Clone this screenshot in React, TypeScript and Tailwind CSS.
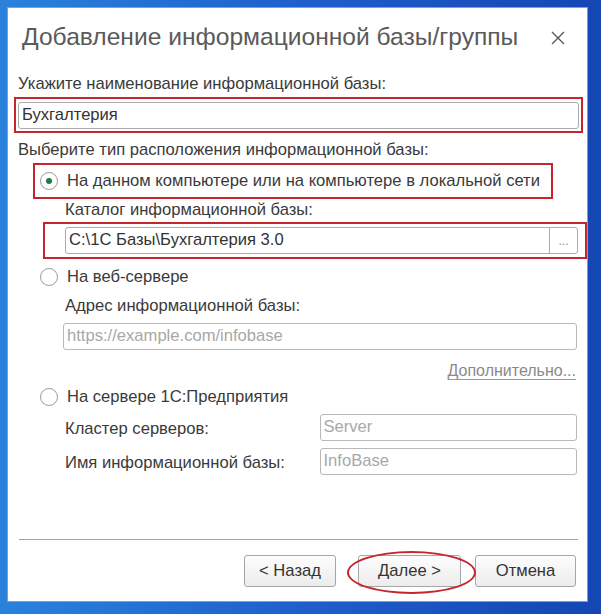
import React from 'react';

const font = { fontFamily: '"Liberation Sans", Arial, sans-serif' };

function Radio({ checked = false }: { checked?: boolean }) {
  return (
    <span className="flex h-[18px] w-[18px] shrink-0 items-center justify-center rounded-full border border-[#9c9c9c] bg-white">
      {checked && <span className="h-[6px] w-[6px] rounded-full bg-[#1e7d45]" />}
    </span>
  );
}

function Field({ value, placeholder, className = '' }: { value?: string; placeholder?: string; className?: string }) {
  return (
    <div
      className={`flex h-[27px] items-center rounded-[3px] border border-[#ababab] bg-white px-[3px] text-[16.6px] ${className}`}
    >
      {value ? (
        <span className="text-[#333]">{value}</span>
      ) : (
        <span className="text-[#a8a8a8]">{placeholder}</span>
      )}
    </div>
  );
}

function DialogButton({ label }: { label: string }) {
  return (
    <button className="flex h-[32px] w-full items-center justify-center rounded-[3px] border border-[#a6a6a6] bg-gradient-to-b from-[#fdfdfd] to-[#ececec] text-[16.6px] text-[#333]">
      {label}
    </button>
  );
}

export default function App() {
  return (
    <div
      className="h-[614px] w-[601px] overflow-hidden bg-gradient-to-r from-[#2a82dc] via-[#1f5fcc] to-[#1446b4] pl-[7px] pt-[7px]"
      style={font}
    >
      <div className="relative flex h-[595px] w-[581px] flex-col border border-[#8d9db3] bg-white px-[10px] text-[#3a3a3a]">
        {/* Title */}
        <div className="flex h-[59px] shrink-0 items-center justify-between pl-[4px]">
          <h1 className="text-[24.6px] font-normal leading-none text-[#5a5a5a]">
            Добавление информационной базы/группы
          </h1>
          <svg width="14" height="14" viewBox="0 0 14 14" className="mr-[12px]">
            <path d="M1 1 L13 13 M13 1 L1 13" stroke="#555" strokeWidth="1.3" fill="none" />
          </svg>
        </div>

        <div className="flex h-[30px] items-center pt-[5px] text-[16.6px]">Укажите наименование информационной базы:</div>

        <div className="-ml-[4px] flex h-[36px] w-[569px] items-center border-2 border-[#c4262e] px-[2px]">
          <Field value="Бухгалтерия" className="w-full" />
        </div>

        <div className="flex h-[30px] items-end text-[16.6px]">Выберите тип расположения информационной базы:</div>

        <div className="ml-[15px] flex h-[36px] w-[520px] items-center gap-[9px] border-2 border-[#c4262e] pl-[5px] text-[16.6px]">
          <Radio checked />
          <span>На данном компьютере или на компьютере в локальной сети</span>
        </div>

        <div className="ml-[47px] flex h-[23px] items-center text-[16.6px]">Каталог информационной базы:</div>

        <div className="ml-[25px] flex h-[37px] w-[544px] items-center border-2 border-[#c4262e] pl-[20px] pr-[7px]">
          <div className="flex h-[27px] w-full overflow-hidden rounded-[3px] border border-[#ababab] bg-white">
            <div className="flex flex-1 items-center px-[3px] text-[16.6px] text-[#333]">C:\1С Базы\Бухгалтерия 3.0</div>
            <div className="flex w-[28px] items-center justify-center border-l border-[#ababab] text-[12px] text-[#888]">
              ...
            </div>
          </div>
        </div>

        <div className="ml-[22px] flex h-[36px] items-center gap-[9px] text-[16.6px]">
          <Radio />
          <span>На веб-сервере</span>
        </div>

        <div className="ml-[47px] flex h-[23px] items-center text-[16.6px]">Адрес информационной базы:</div>

        <div className="ml-[45px] pt-[5px]">
          <Field placeholder="https://example.com/infobase" className="w-[514px] border-[#b8b8b8]" />
        </div>

        <div className="flex h-[36px] justify-end pr-[1px] pt-[9px] text-[16px]">
          <span className="text-[#8a8a8a] underline decoration-[#9a9a9a] underline-offset-[3px]">Дополнительно...</span>
        </div>

        <div className="ml-[22px] flex h-[22px] items-center gap-[9px] text-[16.6px]">
          <Radio />
          <span>На сервере 1С:Предприятия</span>
        </div>

        <div className="ml-[47px] mt-[6px] flex h-[27px] items-center">
          <span className="w-[255px] pt-[3px] text-[16.6px]">Кластер серверов:</span>
          <Field placeholder="Server" className="w-[258px] border-[#b8b8b8]" />
        </div>

        <div className="ml-[47px] mt-[7px] flex h-[27px] items-center">
          <span className="w-[255px] pt-[3px] text-[16.6px]">Имя информационной базы:</span>
          <Field placeholder="InfoBase" className="w-[258px] border-[#b8b8b8]" />
        </div>

        <div className="flex-1" />

        <div className="ml-[1px] h-px w-[559px] bg-[#a3a3a3]" />

        <div className="flex h-[61px] items-start justify-end pr-[1px] pt-[15px]">
          <div className="w-[92px]">
            <DialogButton label="< Назад" />
          </div>
          <div className="ml-[22px] w-[103px]">
            <DialogButton label="Далее >" />
          </div>
          <div className="ml-[14px] w-[101px]">
            <DialogButton label="Отмена" />
          </div>
        </div>

        {/* red highlight ellipse over the Next button */}
        <div className="pointer-events-none absolute left-[339px] top-[543px] h-[43px] w-[129px] rounded-[50%] border-2 border-[#c4262e]" />
      </div>
    </div>
  );
}
